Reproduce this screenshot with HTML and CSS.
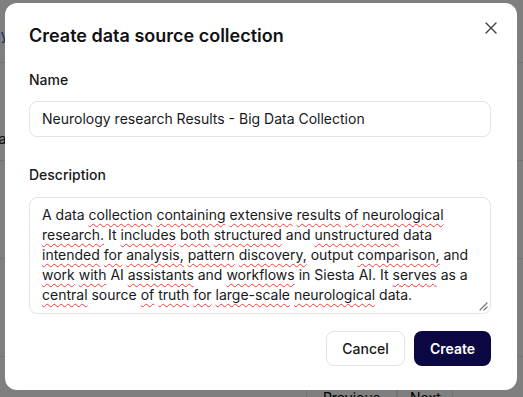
FILE: index.html
```html
<!DOCTYPE html>
<html lang="en">
<head>
  <meta charset="UTF-8">
  <title>Data source collections</title>
  <link rel="stylesheet" href="styles.css">
</head>
<body>

  <div class="page">
    <div class="header"><span class="cell-link">My</span></div>
    <div class="rows">
      <div class="row">Data</div>
      <div class="row"></div>
      <div class="row">Par</div>
    </div>
    <div class="pager">
      <button>Previous</button>
      <button>Next</button>
    </div>
  </div>

  <div class="overlay">
    <div class="modal">
      <button class="close" aria-label="Close">
        <svg width="12" height="12" viewBox="0 0 12 12">
          <path d="M1 1 L11 11 M11 1 L1 11" stroke="#3f3f46" stroke-width="1.4" stroke-linecap="round"/>
        </svg>
      </button>

      <h2>Create data source collection</h2>

      <label class="field-label">Name</label>
      <div class="input">Neurology research Results - Big Data Collection</div>

      <label class="field-label desc-label">Description</label>
      <div class="textarea">
        A data <span class="sp">collection</span> <span class="sp">containing</span> <span class="sp">extensive</span> <span class="sp">results</span> <span class="sp">of</span> <span class="sp">neurological</span>
        <span class="sp">research.</span> It <span class="sp">includes</span> <span class="sp">both</span> <span class="sp">structured</span> and <span class="sp">unstructured</span> data
        <span class="sp">intended</span> <span class="sp">for</span> <span class="sp">analysis,</span> <span class="sp">pattern</span> <span class="sp">discovery,</span> output <span class="sp">comparison,</span> and
        <span class="sp">work</span> <span class="sp">with</span> AI <span class="sp">assistants</span> and <span class="sp">workflows</span> in Siesta AI. It <span class="sp">serves</span> as a
        <span class="sp">central</span> source <span class="sp">of</span> <span class="sp">truth</span> <span class="sp">for</span> <span class="sp">large-scale</span> <span class="sp">neurological</span> data.
        <svg class="grip" width="10" height="10" viewBox="0 0 10 10">
          <path d="M9 2 L2 9 M9 6 L6 9" stroke="#777" stroke-width="1.2" stroke-linecap="round"/>
        </svg>
      </div>

      <div class="actions">
        <button class="btn btn-cancel">Cancel</button>
        <button class="btn btn-create">Create</button>
      </div>
    </div>
  </div>

</body>
</html>
```

FILE: styles.css
```css
body {
  margin: 0;
  padding: 0;
  font-family: Inter, "Noto Sans", sans-serif;
  color: #18181b;
  background: #fff;
}
.page {
  width: 523px;
  height: 397px;
  overflow: hidden;
  font-size: 14px;
}
.header {
  box-sizing: border-box;
  height: 62px;
  padding: 26px 0 0 0;
  margin-left: -12px;
}
.cell-link {
  color: #1d4ed8;
}
.rows {
  border-bottom: 1px solid #e4e4e7;
}
.row {
  box-sizing: border-box;
  height: 98px;
  padding-top: 67px;
  margin-left: -22px;
  padding-left: 22px;
  border-top: 1px solid #e4e4e7;
  text-indent: -24px;
}
.pager {
  display: flex;
  margin-left: 306px;
  margin-top: 25px;
}
.pager button {
  font-family: Inter, sans-serif;
  font-size: 14px;
  background: #fff;
  border: 1px solid #e4e4e7;
  padding: 6px 12px;
  width: 91px;
}
.pager button + button {
  width: 56px;
}
.overlay {
  position: fixed;
  top: 0;
  left: 0;
  width: 100vw;
  height: 100vh;
  background-color: rgba(0, 0, 0, 0.5);
}
.modal {
  position: relative;
  box-sizing: border-box;
  width: 512px;
  height: 387px;
  margin: 3px 0 0 5px;
  background: #fff;
  border-radius: 12px;
  padding: 19px 26px 24px 24px;
  display: flex;
  flex-direction: column;
}
.close {
  position: absolute;
  top: 19px;
  right: 20px;
  background: none;
  border: none;
  padding: 0;
  width: 12px;
  height: 12px;
  display: flex;
}
.modal h2 {
  margin: 0;
  font-size: 18px;
  line-height: 28px;
  font-weight: 600;
  color: #111114;
}
.field-label {
  display: block;
  font-size: 14px;
  line-height: 20px;
  font-weight: 500;
  margin-top: 20px;
}
.desc-label {
  margin-top: 28px;
}
.input {
  box-sizing: border-box;
  height: 36px;
  margin-top: 11px;
  padding: 0 12px;
  border: 1px solid #e4e4e7;
  border-radius: 8px;
  font-size: 14px;
  line-height: 34px;
}
.textarea {
  position: relative;
  box-sizing: border-box;
  height: 117px;
  margin-top: 12px;
  padding: 7px 12px;
  border: 1px solid #e4e4e7;
  border-radius: 8px;
  font-size: 14px;
  line-height: 20px;
}
.sp {
  text-decoration: underline wavy #ef3e3e;
  text-decoration-thickness: 1px;
  text-underline-offset: 3px;
}
.grip {
  position: absolute;
  right: 2px;
  bottom: 2px;
}
.actions {
  display: flex;
  justify-content: flex-end;
  gap: 9px;
  margin-top: 17px;
}
.btn {
  font-family: Inter, sans-serif;
  font-size: 14px;
  font-weight: 500;
  height: 35px;
  border-radius: 8px;
  cursor: pointer;
}
.btn-cancel {
  width: 79px;
  background: #fff;
  color: #18181b;
  border: 1px solid #e4e4e7;
}
.btn-create {
  width: 77px;
  background: #0b0742;
  color: #fff;
  border: none;
  font-weight: 600;
}
```
